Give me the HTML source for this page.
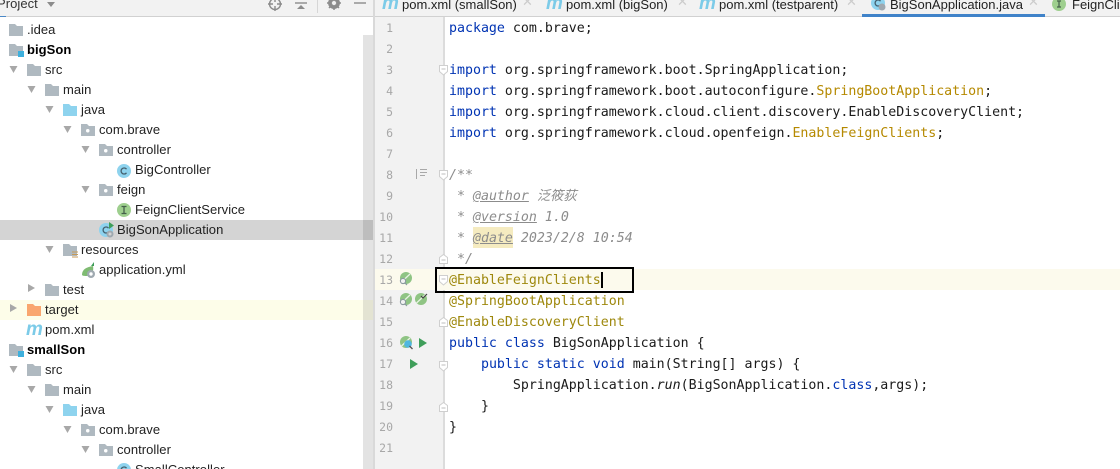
<!DOCTYPE html>
<html><head><meta charset="utf-8">
<style>
html,body{margin:0;padding:0;background:#fff}
#r{position:relative;width:1120px;height:469px;overflow:hidden;background:#fff;font-family:"Liberation Sans","Noto Sans CJK SC",sans-serif;color:#1a1a1a}
.a{position:absolute}
.t{position:absolute;font-size:13px;line-height:20px;height:20px;white-space:nowrap;color:#222;letter-spacing:.05px;margin-top:1px}
.c{position:absolute;left:449px;font-family:"DejaVu Sans Mono","Noto Sans CJK SC",monospace;font-size:13.28px;line-height:21px;height:21px;white-space:pre;color:#1a1a1a;margin-top:1px}
.n{position:absolute;left:371px;width:22px;text-align:right;font-family:"DejaVu Sans Mono",monospace;font-size:11.5px;line-height:21px;color:#a8a8a8;margin-top:1px}
.kw{color:#0033b3}.an{color:#9e880d}.im{color:#b58900}
.cm{color:#8c8c8c;font-style:italic}.tg{text-decoration:underline}
.tab{position:absolute;top:-5px;font-size:13px;line-height:20px;white-space:nowrap;color:#222}
.x{position:absolute;top:-6px;color:#cccccc;font-size:13px;line-height:16px}
.m{position:absolute;font:italic bold 19px/16px "Liberation Sans",sans-serif;color:#7ccbe8}
svg{position:absolute;overflow:visible}
</style></head><body><div id="r">
<div class="a" style="left:0;top:0;width:1120px;height:16px;background:#f2f2f2"></div>
<div class="a" style="left:0;top:16px;width:1120px;height:1px;background:#d1d1d1"></div>
<div class="a" style="left:0;top:16px;width:6px;height:1px;background:#4a88c7"></div>
<div class="t" style="left:-3px;top:-7px;color:#333">Project</div>
<svg style="left:0;top:0" width="375" height="16">
<path d="M47 2h8l-4 5z" fill="#8c8c8c"/>
<circle cx="275" cy="4" r="5.500" fill="none" stroke="#8c8c8c" stroke-width="1.400"/>
<path d="M275-3v5M275 6v5M268 4h5M277 4h5" stroke="#8c8c8c" stroke-width="1.400"/>
<path d="M295 3h12" stroke="#8c8c8c" stroke-width="1.400"/><path d="M297 9h8l-4-4z" fill="#8c8c8c"/>
<path d="M317.500 0v13" stroke="#d6d6d6"/>
<circle cx="334" cy="3" r="4.200" fill="none" stroke="#8c8c8c" stroke-width="3.500"/>
<path d="M334 -4v14M327 3h14M329 -2l10 10M339 -2l-10 10" stroke="#8c8c8c" stroke-width="1.500"/>
<circle cx="334" cy="3" r="2" fill="#f2f2f2"/>
<path d="M354 3h12" stroke="#8c8c8c" stroke-width="1.400"/>
</svg>
<div class="a" style="left:373px;top:0;width:2px;height:469px;background:#d9d9d9"></div>
<div class="a" style="left:363px;top:35px;width:10px;height:434px;background:#e3e3e3"></div>
<div class="a" style="left:0;top:220px;width:373px;height:20px;background:#d4d4d4"></div>
<div class="a" style="left:363px;top:220px;width:10px;height:20px;background:#bdbdbd"></div>
<div class="a" style="left:0;top:300px;width:373px;height:20px;background:#fdfde9"></div>
<div class="a" style="left:363px;top:300px;width:10px;height:20px;background:#e3e3d2"></div>
<svg style="left:0;top:0" width="375" height="469">
<defs>
<path id="f" d="M0 0h6l2 2h6v10H0z"/>
<path id="d" d="M0 0h8l-4 7z" fill="#a8a8a8"/>
<g id="p"><use href="#f" fill="#afb9c0"/><rect x="5" y="5" width="3.500" height="3.500" rx="1.700" fill="#fff"/></g>
<g id="mod"><use href="#f" fill="#afb9c0"/><rect x="9" y="7" width="6" height="6" fill="#3eb0dd"/></g>
<g id="cc"><circle cx="7" cy="7" r="7" fill="#8ed3ee"/><path d="M9.500 5.200A3 3 0 1 0 9.500 8.800" fill="none" stroke="#44606e" stroke-width="1.300"/></g>
<g id="ss"><path d="M1 11C1 5 6 3 12 2c1 5-1 10-7 10-2 0-4-.500-4-1z" fill="#7fbb72"/></g>
</defs>
<use href="#f" x="9" y="24" fill="#afb9c0"/>
<use href="#mod" x="9" y="44"/>
<use href="#d" x="9.500" y="66"/><use href="#f" x="27" y="64" fill="#afb9c0"/>
<use href="#d" x="27.500" y="86"/><use href="#f" x="45" y="84" fill="#afb9c0"/>
<use href="#d" x="45.500" y="106"/><use href="#f" x="63" y="104" fill="#8ed3ee"/>
<use href="#d" x="63.500" y="126"/><use href="#p" x="81" y="124"/>
<use href="#d" x="81.500" y="146"/><use href="#p" x="99" y="144"/>
<use href="#cc" x="117" y="164"/>
<use href="#d" x="81.500" y="186"/><use href="#p" x="99" y="184"/>
<circle cx="124" cy="210" r="7" fill="#9ecf8e"/><path d="M121.500 206.500h5M124 206.500v7M121.500 213.500h5" stroke="#44604a" stroke-width="1.300" fill="none"/>
<use href="#cc" x="99" y="223"/><path d="M109 222l5 3.500-5 3.500z" fill="#3f9e5a"/><circle cx="110" cy="234" r="3.500" fill="#9fa9b0"/><circle cx="110" cy="234" r="1.500" fill="#d4d4d4"/>
<use href="#d" x="45.500" y="246"/><use href="#f" x="63" y="244" fill="#afb9c0"/><path d="M72 252h6M72 254.500h6M72 257h6" stroke="#c79a58"/>
<use href="#ss" x="81" y="264"/><path d="M94 262v4h-3z" fill="#3f9e5a"/><circle cx="91" cy="274" r="4" fill="#9fa9b0"/><circle cx="91" cy="274" r="1.700" fill="#fff"/>
<path d="M28 284l7 4-7 4z" fill="#a8a8a8"/><use href="#f" x="45" y="284" fill="#afb9c0"/>
<path d="M10 304l7 4-7 4z" fill="#a8a8a8"/><use href="#f" x="27" y="304" fill="#f9a66f"/>
<use href="#mod" x="9" y="344"/>
<use href="#d" x="9.500" y="366"/><use href="#f" x="27" y="364" fill="#afb9c0"/>
<use href="#d" x="27.500" y="386"/><use href="#f" x="45" y="384" fill="#afb9c0"/>
<use href="#d" x="45.500" y="406"/><use href="#f" x="63" y="404" fill="#8ed3ee"/>
<use href="#d" x="63.500" y="426"/><use href="#p" x="81" y="424"/>
<use href="#d" x="81.500" y="446"/><use href="#p" x="99" y="444"/>
<use href="#cc" x="117" y="463"/>
</svg>
<div class="t" style="left:27px;top:19px">.idea</div>
<div class="t" style="left:27px;top:39px;font-weight:bold;color:#000">bigSon</div>
<div class="t" style="left:45px;top:59px">src</div>
<div class="t" style="left:63px;top:79px">main</div>
<div class="t" style="left:81px;top:99px">java</div>
<div class="t" style="left:99px;top:119px">com.brave</div>
<div class="t" style="left:117px;top:139px">controller</div>
<div class="t" style="left:135px;top:159px">BigController</div>
<div class="t" style="left:117px;top:179px">feign</div>
<div class="t" style="left:135px;top:199px">FeignClientService</div>
<div class="t" style="left:117px;top:219px">BigSonApplication</div>
<div class="t" style="left:81px;top:239px">resources</div>
<div class="t" style="left:99px;top:259px">application.yml</div>
<div class="t" style="left:63px;top:279px">test</div>
<div class="t" style="left:45px;top:299px">target</div>
<div class="m" style="left:26px;top:322px">m</div>
<div class="t" style="left:45px;top:319px">pom.xml</div>
<div class="t" style="left:27px;top:339px;font-weight:bold;color:#000">smallSon</div>
<div class="t" style="left:45px;top:359px">src</div>
<div class="t" style="left:63px;top:379px">main</div>
<div class="t" style="left:81px;top:399px">java</div>
<div class="t" style="left:99px;top:419px">com.brave</div>
<div class="t" style="left:117px;top:439px">controller</div>
<div class="t" style="left:135px;top:459px">SmallController</div>

<div class="m" style="left:382px;top:-4px">m</div><div class="tab" style="left:402px">pom.xml (smallSon)</div><div class="x" style="left:522px">✕</div>
<div class="m" style="left:546px;top:-4px">m</div><div class="tab" style="left:566px">pom.xml (bigSon)</div><div class="x" style="left:677px">✕</div>
<div class="m" style="left:699px;top:-4px">m</div><div class="tab" style="left:719px">pom.xml (testparent)</div><div class="x" style="left:846px">✕</div>
<div class="tab" style="left:890px">BigSonApplication.java</div><div class="x" style="left:1028px">✕</div>
<div class="tab" style="left:1072px">FeignClie</div>
<div class="a" style="left:862px;top:14px;width:183px;height:3px;background:#4083c9"></div>
<svg style="left:0;top:0" width="1120" height="16">
<use href="#cc" x="871" y="-4"/><circle cx="882" cy="7" r="3.500" fill="#9fa9b0"/>
<circle cx="1059" cy="4" r="7" fill="#9ecf8e"/><path d="M1057 1h4M1059 1v6M1057 7h4" stroke="#44604a" stroke-width="1.200" fill="none"/>
</svg>

<div class="a" style="left:375px;top:17px;width:68px;height:452px;background:#f2f2f2"></div>
<div class="a" style="left:443px;top:17px;width:2px;height:452px;background:#dcdcdc"></div>
<div class="a" style="left:375px;top:269px;width:745px;height:21px;background:#fcfaed"></div>
<div class="a" style="left:473px;top:227px;width:40px;height:21px;background:#f5ebc0"></div>

<div class="n" style="top:17px">1</div><div class="n" style="top:38px">2</div><div class="n" style="top:59px">3</div><div class="n" style="top:80px">4</div><div class="n" style="top:101px">5</div><div class="n" style="top:122px">6</div><div class="n" style="top:143px">7</div><div class="n" style="top:164px">8</div><div class="n" style="top:185px">9</div><div class="n" style="top:206px">10</div><div class="n" style="top:227px">11</div><div class="n" style="top:248px">12</div><div class="n" style="top:269px">13</div><div class="n" style="top:290px">14</div><div class="n" style="top:311px">15</div><div class="n" style="top:332px">16</div><div class="n" style="top:353px">17</div><div class="n" style="top:374px">18</div><div class="n" style="top:395px">19</div><div class="n" style="top:416px">20</div><div class="n" style="top:437px">21</div>

<div class="c" style="top:17px"><span class="kw">package</span> com.brave;</div>
<div class="c" style="top:59px"><span class="kw">import</span> org.springframework.boot.SpringApplication;</div>
<div class="c" style="top:80px"><span class="kw">import</span> org.springframework.boot.autoconfigure.<span class="im">SpringBootApplication</span>;</div>
<div class="c" style="top:101px"><span class="kw">import</span> org.springframework.cloud.client.discovery.EnableDiscoveryClient;</div>
<div class="c" style="top:122px"><span class="kw">import</span> org.springframework.cloud.openfeign.<span class="im">EnableFeignClients</span>;</div>
<div class="c cm" style="top:164px">/**</div>
<div class="c cm" style="top:185px"> * <span class="tg">@author</span> 泛筱荻</div>
<div class="c cm" style="top:206px"> * <span class="tg">@version</span> 1.0</div>
<div class="c cm" style="top:227px"> * <span class="tg">@date</span> 2023/2/8 10:54</div>
<div class="c cm" style="top:248px"> */</div>
<div class="c an" style="top:269px">@EnableFeignClients</div>
<div class="c an" style="top:290px">@SpringBootApplication</div>
<div class="c an" style="top:311px">@EnableDiscoveryClient</div>
<div class="c" style="top:332px"><span class="kw">public class</span> BigSonApplication {</div>
<div class="c" style="top:353px">    <span class="kw">public static void</span> main(String[] args) {</div>
<div class="c" style="top:374px">        SpringApplication.<i>run</i>(BigSonApplication.<span class="kw">class</span>,args);</div>
<div class="c" style="top:395px">    }</div>
<div class="c" style="top:416px">}</div>

<div class="a" style="left:435px;top:267px;width:195px;height:22px;border:2px solid #000"></div>
<div class="a" style="left:601px;top:272px;width:2px;height:16px;background:#000"></div>

<svg style="left:0;top:0" width="1120" height="469">
<defs>
<g id="fo"><path d="M.5 .5h8v6l-4 3.500-4-3.500z" fill="#fff" stroke="#cfcfcf"/><path d="M2.500 4h4" stroke="#bdbdbd"/></g>
<g id="fu"><path d="M.5 9.500h8v-6l-4-3-4 3z" fill="#fff" stroke="#cfcfcf"/><path d="M2.500 6h4" stroke="#bdbdbd"/></g>
<g id="lf"><circle cx="6" cy="6" r="6" fill="#8fc484"/><path d="M1.500 10L10 2" stroke="#e8f3e4" stroke-width="1.300"/></g>
<g id="mg"><circle cx="0" cy="0" r="2.600" fill="#f2f2f2" stroke="#8c9aa0" stroke-width="1.100"/><path d="M2 2l2 2" stroke="#8c9aa0" stroke-width="1.200"/></g>
</defs>
<use href="#fo" x="439" y="65"/>
<use href="#fo" x="439" y="170"/>
<use href="#fu" x="439" y="254"/>
<use href="#fo" x="439" y="275"/>
<use href="#fu" x="439" y="317"/>
<use href="#fo" x="439" y="361"/>
<use href="#fu" x="439" y="402"/>
<path d="M416.500 169v10M420 169.500h7M420 172.500h7M420 175.500h5" stroke="#a8a8a8" fill="none"/>
<use href="#lf" x="400" y="272"/><use href="#mg" x="403" y="281"/>
<use href="#lf" x="400" y="293"/><use href="#mg" x="403" y="302"/>
<use href="#lf" x="415" y="293"/><path d="M421 296l2 2 4-4" stroke="#444" stroke-width="1.200" fill="none"/>
<use href="#lf" x="400" y="336"/><circle cx="408" cy="344" r="3.800" fill="#4fb7e0"/><path d="M409.500 346l3 3" stroke="#555" stroke-width="1.300"/>
<path d="M419 338l8 5-8 5z" fill="#3f9e5a"/>
<path d="M410 359l8 5-8 5z" fill="#3f9e5a"/>
</svg>
</div></body></html>
